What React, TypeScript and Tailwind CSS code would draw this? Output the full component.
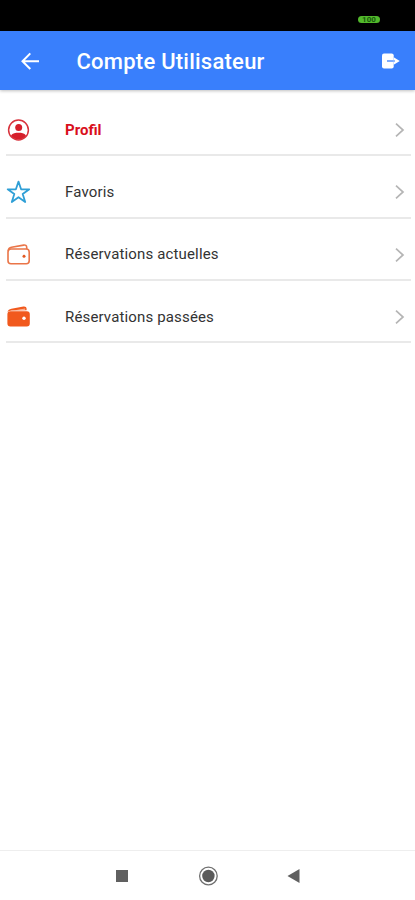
import type { ReactNode } from "react";

function ProfileIcon() {
  return (
    <svg className="size-6" viewBox="0 0 24 24" fill="none">
      <circle cx="12.5" cy="12" r="9.9" stroke="#d8333d" strokeWidth="1.5" />
      <circle cx="12.7" cy="9.6" r="3.5" fill="#d61f2b" />
      <path d="M5 17.4C6.6 15.2 9.5 14.7 12.5 14.7s5.9.5 7.5 2.7a9.4 9.4 0 0 1-7.5 4.2A9.4 9.4 0 0 1 5 17.4Z" fill="#d61f2b" />
    </svg>
  );
}

function StarIcon() {
  return (
    <svg className="size-6" viewBox="0 0 24 24" fill="none">
      <path
        d="M12.5 1.6l2.6 7.7h8.2l-6.6 4.8 2.5 7.9-6.7-4.8L5.8 22l2.5-7.9-6.6-4.8h8.2l2.6-7.7Z"
        stroke="#2f9fd6"
        strokeWidth="1.8"
        strokeLinejoin="round"
      />
    </svg>
  );
}

function WalletOutlineIcon() {
  return (
    <svg className="size-6" viewBox="0 0 24 24" fill="none">
      <rect x="2" y="6" width="21.2" height="14.8" rx="3" stroke="#ea7548" strokeWidth="1.6" />
      <path
        d="M2.2 7.8C2.5 5.5 3.8 4.6 5.5 4.3l12.2-2.2c1.7-.3 3 .5 3 2.1V6"
        stroke="#ea7548"
        strokeWidth="1.6"
      />
      <circle cx="18" cy="13.2" r="1.5" fill="#e2571f" />
    </svg>
  );
}

function WalletIcon() {
  return (
    <svg className="size-6" viewBox="0 0 24 24" fill="none">
      <path
        d="M4.4 6.2h16.4a3 3 0 0 1 3 3v9.4a3 3 0 0 1-3 3H4.4a3 3 0 0 1-3-3V9.2a3 3 0 0 1 3-3Z"
        fill="#f1591d"
      />
      <path d="M1.5 7.2C2 5 3.4 4.1 5.4 3.7l12-2.2c1.8-.3 3.1.6 3.2 2.2v1.6l-15 .2c-1.7.1-3 .7-4.1 1.7Z" fill="#f1591d" />
      <path d="M9 5.2l10.2-1.8v1.4L9 5.2Z" fill="#fff" fillOpacity="0.6" />
      <circle cx="18" cy="13.2" r="1.7" fill="#fff" />
    </svg>
  );
}

type ItemProps = {
  icon: ReactNode;
  label: string;
  active?: boolean;
};

function MenuItem({ icon, label, active }: ItemProps) {
  return (
    <li className="flex h-[62.3px] flex-col pl-1.5 pr-1">
      <a className="flex flex-1 items-center pt-3" href="#">
        {icon}
        <span
          className={
            active
              ? "ml-[35px] flex-1 text-[15px] font-bold text-[#d90f1c]"
              : "ml-[35px] flex-1 text-[15px] tracking-[0.15px] text-[#333]"
          }>
          {label}
        </span>
        <svg className="mr-[5px] h-4 w-3" viewBox="0 0 12 16" fill="none">
          <path d="M2 1.7L9 8l-7 6.3" stroke="#b5b5b5" strokeWidth="1.7" />
        </svg>
      </a>
      <div className="h-[2px] shrink-0 bg-[#e9e9e9]" />
    </li>
  );
}

export default function App() {
  return (
    <div className="flex h-[900px] w-[415px] flex-col bg-white font-['Roboto',sans-serif]">
      {/* Status bar */}
      <div className="flex h-[31px] justify-end bg-black pr-[35px] pt-4">
        <div className="flex h-[7px] w-[22px] items-center justify-center rounded-full bg-[#52b82c] text-[8px] font-bold leading-none text-[#17580b]">
          100
        </div>
      </div>

      {/* Header */}
      <header className="flex h-[59px] items-center bg-[#397ffc] pl-5 pr-[15px] shadow-[0_1px_3px_rgba(0,0,0,0.25)]">
        <svg className="h-5 w-5" viewBox="0 0 20 20" fill="none">
          <path d="M19 10.2H2.5M10.3 2.4L2.5 10.2l7.8 7.8" stroke="#fff" strokeWidth="2" />
        </svg>
        <h1 className="ml-[36.5px] flex-1 pt-px text-[22px] font-medium tracking-[0.24px] text-white">
          Compte Utilisateur
        </h1>
        <svg className="h-4 w-[18px]" viewBox="0 0 18 16">
          <rect x="0" y="0.5" width="11.7" height="15" rx="2" fill="#fff" />
          <path d="M5 8h6.7" stroke="#397ffc" strokeWidth="1.3" />
          <path d="M11.7 4.2L17.8 8l-6.1 3.8V8.8h1V7.2h-1Z" fill="#fff" />
        </svg>
      </header>

      {/* Menu */}
      <ul className="mt-1 flex-1">
        <MenuItem icon={<ProfileIcon />} label="Profil" active />
        <MenuItem icon={<StarIcon />} label="Favoris" />
        <MenuItem icon={<WalletOutlineIcon />} label="Réservations actuelles" />
        <MenuItem icon={<WalletIcon />} label="Réservations passées" />
      </ul>

      {/* Navigation bar */}
      <nav className="flex h-[50px] items-center justify-between border-t border-[#eeeeee] pl-[116px] pr-[115px]">
        <div className="size-3 bg-[#606060]" />
        <svg className="size-5" viewBox="0 0 20 20" fill="none">
          <circle cx="10.4" cy="10" r="8.8" stroke="#707070" strokeWidth="1.3" />
          <circle cx="10.4" cy="10" r="6.2" fill="#5a5a5a" />
        </svg>
        <svg className="h-[14px] w-[13px]" viewBox="0 0 13 14">
          <path d="M12.5 0v14L0.5 7Z" fill="#606060" />
        </svg>
      </nav>
    </div>
  );
}
